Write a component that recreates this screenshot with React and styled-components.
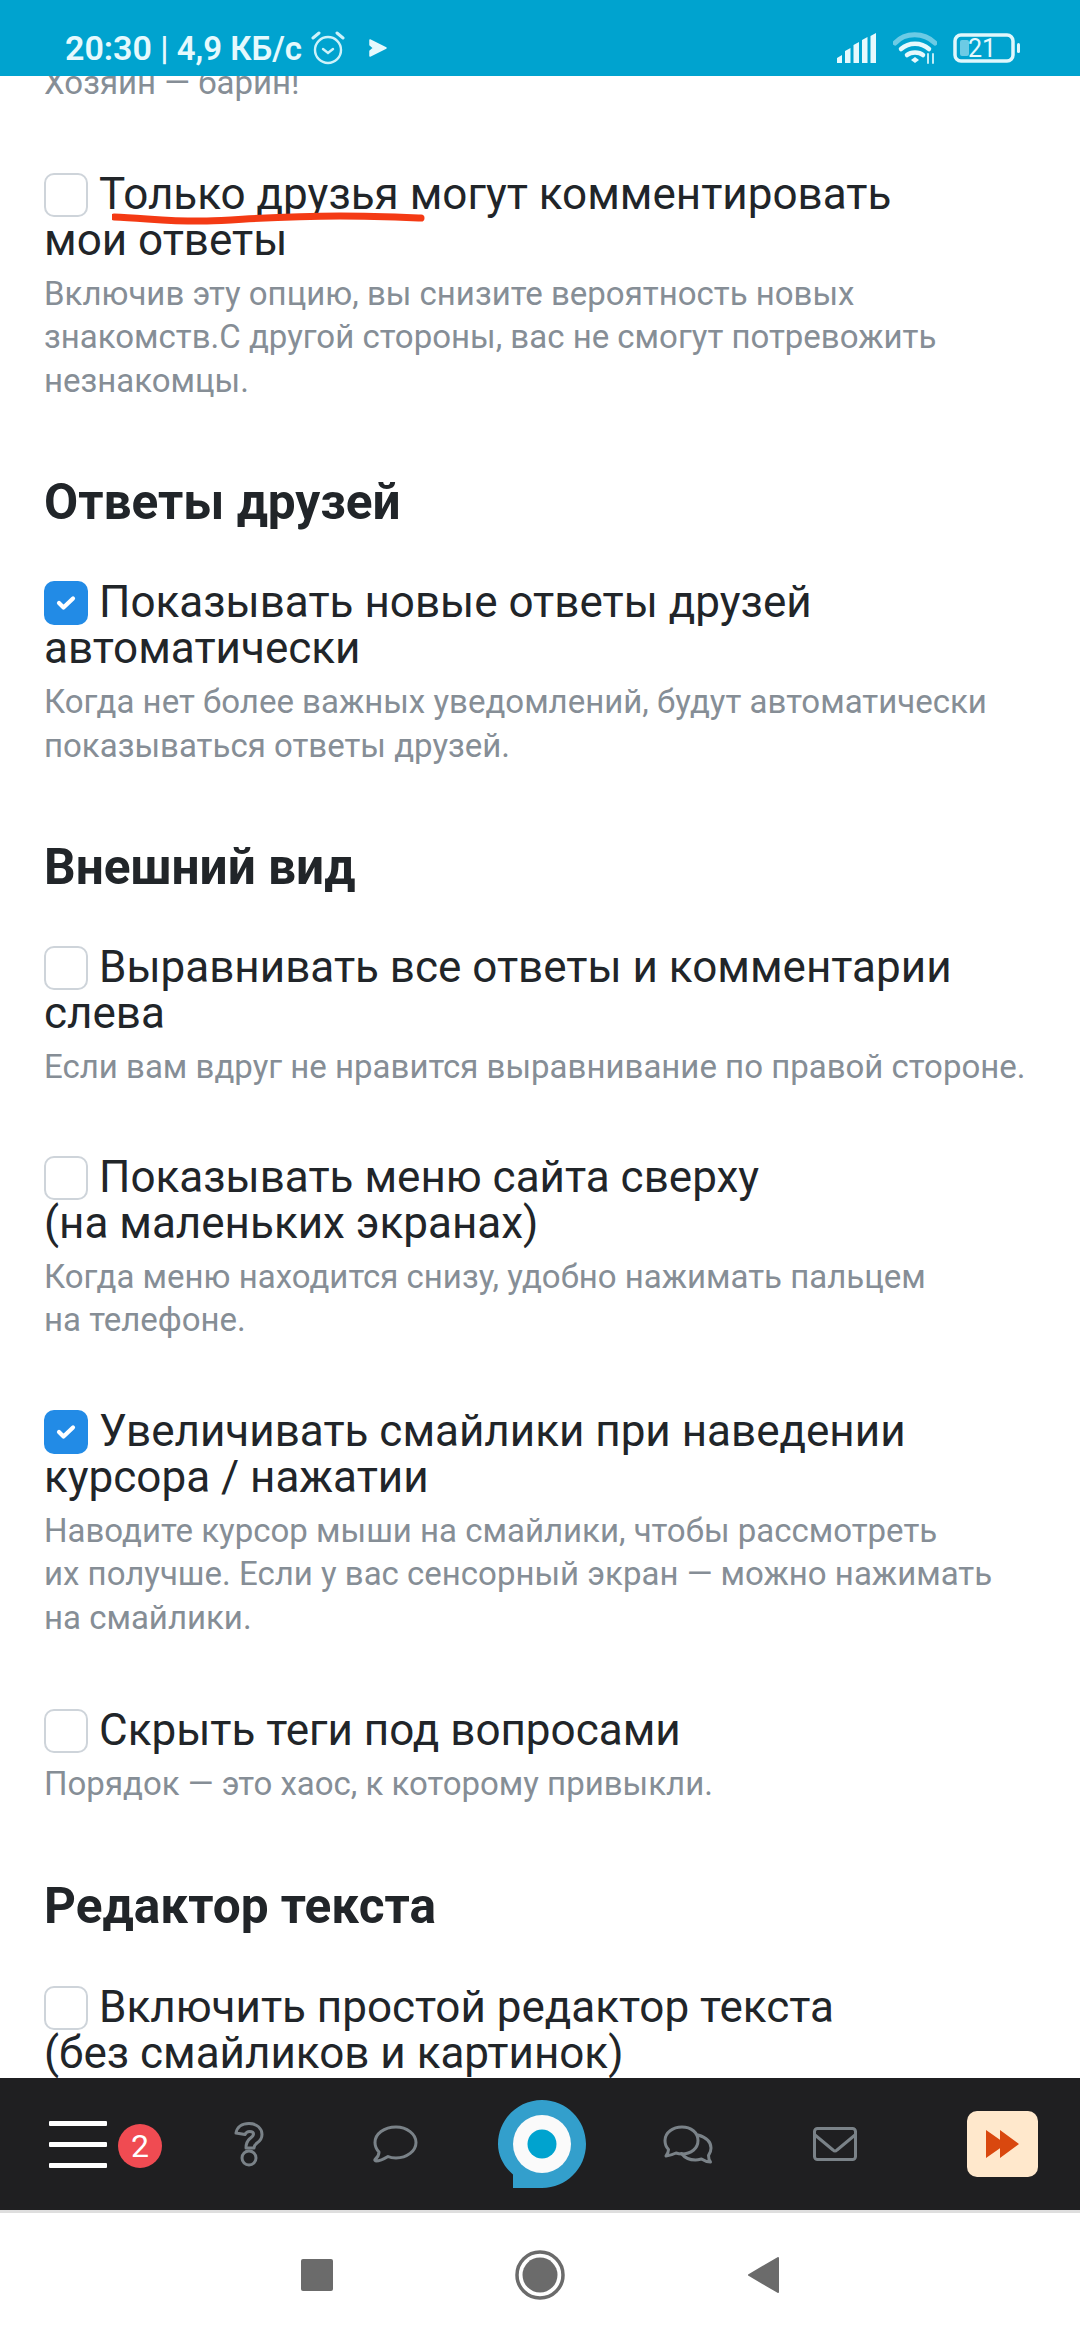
import React from "react";
import styled, { createGlobalStyle } from "styled-components";

const Global = createGlobalStyle`
  html, body { margin: 0; padding: 0; background: #fff; }
  * { box-sizing: border-box; }
`;

const Screen = styled.div`
  width: 1080px; height: 2340px; display: flex; flex-direction: column; overflow: hidden;
  font-family: Roboto, "Liberation Sans", sans-serif; background: #fff;
`;
const StatusBar = styled.header`
  height: 76px; flex: none; background: #00a3cf; color: #e6f9fd; display: flex; align-items: center;
  justify-content: space-between; padding: 20px 60px 0 65px; position: relative; z-index: 2;
`;
const StatusGroup = styled.div`display: flex; align-items: center; gap: ${p => p.$gap || 0}px;`;
const Clock = styled.span`font-size: 34px; font-weight: 600;`;
const Speed = styled.span`font-size: 33px; font-weight: 600; white-space: pre;`;
const AlarmIcon = styled.svg`margin-left: 8px;`;
const PlayIcon = styled.svg`margin-left: 22px;`;
const Content = styled.main`flex: 1; min-height: 0; overflow: hidden; padding: 0 44px;`;
const Clipped = styled.div`margin-top: -15px;`;
const Hint = styled.p`
  margin: 0; font-size: 33px; line-height: 43.5px; color: #868e96; white-space: pre-line;
`;
const Option = styled.section`margin-top: ${p => p.$top ?? 0}px; position: relative;`;
const Label = styled.div`
  font-size: 44px; line-height: 46px; color: #212529; margin-bottom: 9px;
`;
const Box = styled.span`
  display: inline-block; overflow: hidden; width: 44px; height: 44px; padding: 14px 12px;
  border-radius: 10px; vertical-align: -8px; margin-right: 11px;
  border: ${p => p.$on ? "none" : "2px solid #ced4da"}; background: ${p => p.$on ? "#228be6" : "#fff"};
`;
const CheckIcon = styled.svg`display: block;`;
const Heading = styled.h2`
  margin: 72px 0 0; font-size: 49.6px; line-height: 56px; font-weight: 700; color: #212529;
`;
const Scribble = styled.svg`position: absolute; left: 68px; top: 35px; width: 320px; height: 20px;`;
const TabBar = styled.nav`
  height: 132px; flex: none; background: #1f1f21; display: flex; align-items: center;
  padding: 0 42px 0 29px;
`;
const TabSlot = styled.div`
  width: 146.5px; flex: none; display: flex; align-items: center; justify-content: center;
`;
const BurgerSlot = styled(TabSlot)`justify-content: flex-start; padding-left: 20px;`;
const Burger = styled.div`display: flex; flex-direction: column; gap: 16px; width: 58px; position: relative;`;
const BurgerLine = styled.span`height: 5px; border-radius: 1px; background: #fff;`;
const Badge = styled.span`
  position: absolute; left: 69px; top: 3px; width: 44px; height: 44px; border-radius: 50%; background: #f04b52;
  color: #fff; font-size: 32px; display: flex; align-items: center; justify-content: center;
`;
const NextButton = styled.div`
  width: 71px; height: 66px; margin-left: auto; border-radius: 10px; background: #ffe8cc;
  display: flex; align-items: center; justify-content: center;
`;
const SystemNav = styled.footer`
  height: 130px; flex: none; border-top: 3px solid #dedede; background: #fff; display: flex; align-items: center;
  justify-content: center; gap: 182px; padding: 0 0 3px 0;
`;

const G = "#7a8288";
const stroke = { fill: "none", stroke: G, strokeWidth: 3, strokeLinejoin: "round", strokeLinecap: "round" };

const Opt = ({ on, top, label, hint, children }) => (
  <Option $top={top}>
    {children}
    <Label>
      <Box $on={on}>
        {on && (
          <CheckIcon width="20" height="16" viewBox="0 0 20 16">
            <path d="M3 8l4.500 4.500L17 3.500" fill="none" stroke="#fff" strokeWidth="4.200" strokeLinecap="round" strokeLinejoin="round" />
          </CheckIcon>
        )}
      </Box>
      {label}
    </Label>
    <Hint>{hint}</Hint>
  </Option>
);

export default function App() {
  return (
    <Screen>
      <Global />
      <StatusBar>
        <StatusGroup>
          <Clock>20:30</Clock>
          <Speed> | 4,9 КБ/с</Speed>
          <AlarmIcon width="36" height="34" viewBox="0 0 36 34" fill="none" stroke="#cdf2fa" strokeWidth="2.400" strokeLinecap="round">
            <circle cx="18" cy="19" r="13" /><path d="M13 18l5 4 5-4" /><path d="M3 7l6-5M33 7l-6-5" strokeWidth="3" />
          </AlarmIcon>
          <PlayIcon width="20" height="20" viewBox="0 0 20 20">
            <path fill="#e6f9fd" stroke="#e6f9fd" strokeWidth="1.500" strokeLinejoin="round" d="M2 2l16 8-16 8v-5l3.500-3L2 7z" />
          </PlayIcon>
        </StatusGroup>
        <StatusGroup $gap={16}>
          <svg width="40" height="30" viewBox="0 0 40 30" fill="#e6f9fd">
            <path d="M0 30v-5l5-3v8zM8 30V18l5.500-3v15zM16.500 30V12l5.500-3v21zM25 30V7l5.500-3v26zM33.500 30V3l5.500-3v30z" />
          </svg>
          <svg width="44" height="32" viewBox="0 0 44 32" fill="none" strokeLinecap="round">
            <path d="M2 11C12 0 31 0 42 11" stroke="#6ccbe5" strokeWidth="5" />
            <path d="M8 17c8-7 20-7 28 0" stroke="#e6f9fd" strokeWidth="4.500" />
            <path d="M14 23c4-3.500 12-3.500 16 0" stroke="#e6f9fd" strokeWidth="4.500" />
            <path d="M18 28l4-3 4 3-4 3z" fill="#e6f9fd" />
            <path d="M35 22v9M40 22v9" stroke="#d4f4fb" strokeWidth="1.800" />
          </svg>
          <svg width="67" height="30" viewBox="0 0 67 30">
            <rect x="2" y="2" width="58" height="26" rx="6" fill="none" stroke="#e0f7fc" strokeWidth="3.500" />
            <rect x="7" y="7" width="9" height="16" rx="2" fill="#6ccbe5" />
            <text x="29" y="24" textAnchor="middle" fontFamily="Roboto, sans-serif" fontSize="25" fill="#e6f9fd">21</text>
            <rect x="64" y="10" width="3" height="10" rx="1.500" fill="#e0f7fc" />
          </svg>
        </StatusGroup>
      </StatusBar>

      <Content>
        <Clipped>
          <Hint>Хозяин — барин!</Hint>
          <Opt top={66} label={"Только друзья могут комментировать мои\u00a0ответы"}
            hint={"Включив эту опцию, вы снизите вероятность новых\nзнакомств.С другой стороны, вас не смогут потревожить\nнезнакомцы."}>
            <Scribble viewBox="0 0 320 20">
              <path d="M2 11c30 1 60 5 93 4s70-5 133-5c30 0 55 1 81 2" fill="none" stroke="#f43a14" strokeWidth="7" strokeLinecap="round" />
            </Scribble>
          </Opt>
          <Heading>Ответы друзей</Heading>
          <Opt top={49} on label="Показывать новые ответы друзей автоматически"
            hint={"Когда нет более важных уведомлений, будут автоматически\nпоказываться ответы друзей."} />
          <Heading>Внешний вид</Heading>
          <Opt top={49} label="Выравнивать все ответы и комментарии слева"
            hint="Если вам вдруг не нравится выравнивание по правой стороне." />
          <Opt top={65} label={<>Показывать меню сайта сверху<br />(на маленьких экранах)</>}
            hint={"Когда меню находится снизу, удобно нажимать пальцем\nна телефоне."} />
          <Opt top={66} on label="Увеличивать смайлики при наведении курсора / нажатии"
            hint={"Наводите курсор мыши на смайлики, чтобы рассмотреть\nих получше. Если у вас сенсорный экран — можно нажимать\nна смайлики."} />
          <Opt top={68} label="Скрыть теги под вопросами" hint="Порядок — это хаос, к которому привыкли." />
          <Heading>Редактор текста</Heading>
          <Opt top={50} label={<>Включить простой редактор текста<br />(без смайликов и картинок)</>} hint="" />
        </Clipped>
      </Content>

      <TabBar>
        <BurgerSlot>
          <Burger>
            <BurgerLine /><BurgerLine /><BurgerLine />
            <Badge>2</Badge>
          </Burger>
        </BurgerSlot>
        <TabSlot>
          <svg width="30" height="45" viewBox="0 0 30 45" {...stroke}>
            <path d="M2 11C3 5 8 1.500 15 1.500c8 0 13 5 13 11 0 4-2 6.500-5 8.500-2 1.500-3 2.500-3 5h-8c0-4 1-7 4-9.500 2-1.500 3.500-2.500 3.500-4.500 0-1.500-1-2.500-4-2.500-2 0-3.500 1-4.500 3z" />
            <circle cx="15" cy="36" r="7" />
          </svg>
        </TabSlot>
        <TabSlot>
          <svg width="45" height="38" viewBox="0 0 45 38" {...stroke}>
            <path d="M23 2C34 2 43 9 43 17.500S34 33 23 33c-3 0-6-.5-8-1.500C11 34 7 36 3 36c-1 0-1.500-1-.8-1.800C5 32 6 29 6 27 3 24 2 21 2 17.500 2 9 11 2 23 2z" />
          </svg>
        </TabSlot>
        <TabSlot>
          <svg width="88" height="88" viewBox="0 0 88 88">
            <path d="M44 0C68.300 0 88 19.700 88 44S68.300 88 44 88H15V74.500C5.800 66.500 0 55.900 0 44 0 19.700 19.700 0 44 0z" fill="#339fcc" />
            <circle cx="44" cy="44" r="29" fill="#fafafa" />
            <circle cx="44" cy="44" r="14.500" fill="#00a3cf" />
          </svg>
        </TabSlot>
        <TabSlot>
          <svg width="50" height="39" viewBox="0 0 50 39" {...stroke}>
            <path d="M19 2c9 0 16 5.500 16 13.500S28 29 19 29c-2 0-4-.3-6-1-3 1.500-6 2.500-10 3 1.500-2 2.500-4 2.500-6.500C3 22 2 19 2 15.500 2 7.500 10 2 19 2z" />
            <path d="M35 10c7 2 13 6 13 13 0 3-1 5.500-2.500 7.500 0 2.500.5 4.500 2 6.500-3 0-6-1-9-3-2 .5-4 1-6 1-6 0-11-2.500-14-6.500" />
          </svg>
        </TabSlot>
        <TabSlot>
          <svg width="44" height="34" viewBox="0 0 44 34" {...stroke}>
            <rect x="1.500" y="1.500" width="41" height="31" rx="3" /><path d="M2 8l18 15q2 2 4 0L42 8" />
          </svg>
        </TabSlot>
        <NextButton>
          <svg width="33" height="28" viewBox="0 0 33 28" fill="#d9480f">
            <path d="M0 0l20 14L0 28zM14 0l19 14-19 14z" />
          </svg>
        </NextButton>
      </TabBar>

      <SystemNav>
        <svg width="32" height="32" viewBox="0 0 32 32"><rect width="32" height="32" rx="2" fill="#6b6b6b" /></svg>
        <svg width="50" height="50" viewBox="0 0 50 50"><circle cx="25" cy="25" r="23" fill="none" stroke="#6b6b6b" strokeWidth="3.500" /><circle cx="25" cy="25" r="17.500" fill="#6b6b6b" /></svg>
        <svg width="32" height="36" viewBox="0 0 32 36"><path d="M31 1L2 18l29 17z" fill="#6b6b6b" stroke="#6b6b6b" strokeWidth="2" strokeLinejoin="round" /></svg>
      </SystemNav>
    </Screen>
  );
}
